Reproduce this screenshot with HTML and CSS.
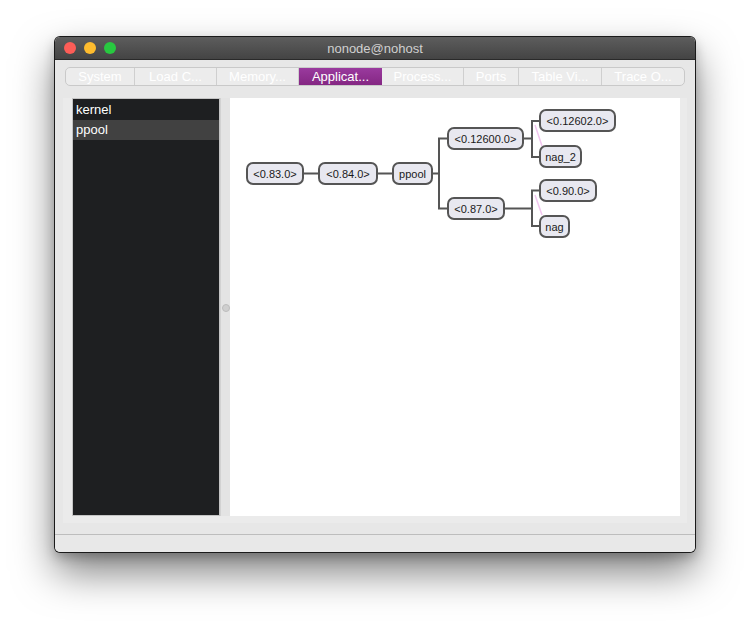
FILE: index.html
```html
<!DOCTYPE html>
<html>
<head>
<meta charset="utf-8">
<link rel="stylesheet" href="styles.css">
</head>
<body>
<div class="window">
  <div class="titlebar">
    <div class="lights">
      <span class="light red"></span>
      <span class="light yellow"></span>
      <span class="light green"></span>
    </div>
    <div class="title">nonode@nohost</div>
  </div>
  <div class="main">
    <div class="tabs">
      <div class="tab w69">System</div>
      <div class="tab w82">Load C...</div>
      <div class="tab w82">Memory...</div>
      <div class="tab w83 active">Applicat...</div>
      <div class="tab w82">Process...</div>
      <div class="tab w55">Ports</div>
      <div class="tab w83">Table Vi...</div>
      <div class="tab last">Trace O...</div>
    </div>
    <div class="page">
      <div class="applist">
        <div class="row">kernel</div>
        <div class="row selected">ppool</div>
      </div>
      <div class="splitter"><span class="grip"></span></div>
      <div class="canvas">
        <svg class="tree" width="450" height="418" viewBox="230 98 450 418">
          <g class="links">
            <line x1="303" y1="173.5" x2="318" y2="173.5"/>
            <line x1="377" y1="173.5" x2="392" y2="173.5"/>
            <polyline points="432,173.5 439,173.5"/>
            <polyline points="447,138.5 439,138.5 439,208.5 447,208.5"/>
            <polyline points="524,138.5 532,138.5"/>
            <polyline points="540,121 532,121 532,157 540,157"/>
            <polyline points="504,208.5 532,208.5"/>
            <polyline points="540,190.5 532,190.5 532,226 540,226"/>
          </g>
          <g class="pink">
            <line x1="535" y1="125" x2="542" y2="146"/>
            <line x1="535" y1="195" x2="542" y2="215"/>
          </g>
          <g class="nodes">
            <rect x="247" y="163" width="56" height="21" rx="6"/>
            <rect x="319" y="163" width="58" height="21" rx="6"/>
            <rect x="393" y="163" width="39" height="21" rx="6"/>
            <rect x="448" y="128" width="75" height="21" rx="6"/>
            <rect x="448" y="198" width="56" height="21" rx="6"/>
            <rect x="540" y="110" width="75" height="21" rx="6"/>
            <rect x="540" y="146" width="41" height="21" rx="6"/>
            <rect x="540" y="180" width="56" height="21" rx="6"/>
            <rect x="540" y="216" width="29" height="21" rx="6"/>
          </g>
          <g class="labels">
            <text x="275" y="177.5">&lt;0.83.0&gt;</text>
            <text x="348" y="177.5">&lt;0.84.0&gt;</text>
            <text x="412.5" y="177.5">ppool</text>
            <text x="485.5" y="142.5">&lt;0.12600.0&gt;</text>
            <text x="476" y="212.5">&lt;0.87.0&gt;</text>
            <text x="577.5" y="124.5">&lt;0.12602.0&gt;</text>
            <text x="560.5" y="160.5">nag_2</text>
            <text x="568" y="194.5">&lt;0.90.0&gt;</text>
            <text x="554.5" y="230.5">nag</text>
          </g>
        </svg>
      </div>
    </div>
    <div class="statusbar"></div>
  </div>
</div>
</body>
</html>
```
FILE: styles.css
```css
html, body {
  margin: 0;
  padding: 0;
  background: #ffffff;
  font-family: "Liberation Sans", Arial, sans-serif;
}
body {
  min-height: 626px;
  overflow: hidden;
}
.window {
  margin-left: 55px;
  margin-top: 37px;
  width: 640px;
  height: 515px;
  border-radius: 5px;
  overflow: hidden;
  box-shadow: 0 0 0 1px #1a1a1a, 0 20px 40px rgba(0,0,0,0.5), 0 5px 12px rgba(0,0,0,0.25);
  display: flex;
  flex-direction: column;
  background: #e7e7e7;
}
.titlebar {
  height: 22px;
  background: linear-gradient(#5d5d5d, #444444);
  border-bottom: 1px solid #2a2a2a;
  position: relative;
  display: flex;
  align-items: center;
  justify-content: center;
}
.lights {
  position: absolute;
  left: 9px;
  top: 5px;
  display: flex;
  gap: 8px;
}
.light {
  width: 12px;
  height: 12px;
  border-radius: 50%;
  display: block;
}
.red { background: #fd5d57; }
.yellow { background: #febc2e; }
.green { background: #28c840; }
.title {
  color: #cfcfcf;
  font-size: 13px;
  font-family: "Liberation Sans", Arial, sans-serif;
}
.main {
  flex: 1;
  display: flex;
  flex-direction: column;
}
.tabs {
  margin: 7px 0 0 10px;
  width: 620px;
  height: 19px;
  display: flex;
  border: 1px solid #c9c9c9;
  border-radius: 5px;
  background: #ececec;
  box-sizing: border-box;
  overflow: hidden;
}
.tab {
  color: #ffffff;
  font-size: 13px;
  line-height: 17px;
  text-align: center;
  border-right: 1px solid #cfcfcf;
  box-sizing: border-box;
  white-space: nowrap;
}
.tab.last { flex: 1; border-right: none; }
.w69 { width: 69px; }
.w82 { width: 82px; }
.w83 { width: 83px; }
.w55 { width: 55px; }
.tab.active {
  background: linear-gradient(#9a3a9e, #842783);
  border-right: none;
}
.page {
  margin: 12px 8px 0 8px;
  padding: 0 7px 7px 9px;
  height: 425px;
  background: #ebebeb;
  display: flex;
  box-sizing: border-box;
}
.applist {
  width: 148px;
  height: 418px;
  background: #1e1f21;
  border: 1px solid #c4c4c4;
  box-sizing: border-box;
  padding-top: 1px;
}
.row {
  height: 20px;
  line-height: 19px;
  color: #ffffff;
  font-size: 13px;
  padding-left: 3px;
}
.row.selected { background: #414141; }
.splitter {
  width: 10px;
  display: flex;
  align-items: center;
  justify-content: center;
  background: #e4e4e4;
  border-left: 1px solid #d2d2d2;
  box-sizing: border-box;
}
.grip {
  width: 6px;
  height: 6px;
  border-radius: 50%;
  background: #cfcfcf;
  border: 1px solid #bdbdbd;
  margin-top: 2px;
}
.canvas {
  width: 450px;
  height: 418px;
  background: #ffffff;
}
.tree { display: block; }
.links line, .links polyline {
  stroke: #555555;
  stroke-width: 2;
  fill: none;
}
.pink line {
  stroke: #f2c6f0;
  stroke-width: 1.5;
}
.nodes rect {
  fill: #e8e8f0;
  stroke: #555555;
  stroke-width: 2;
}
.labels text {
  font-family: "Liberation Sans", Arial, sans-serif;
  font-size: 11px;
  fill: #1a1a1a;
  text-anchor: middle;
}
.statusbar {
  margin-top: 11px;
  flex: 1;
  border-top: 1px solid #bdbdbd;
  background: #e8e8e8;
}
```
